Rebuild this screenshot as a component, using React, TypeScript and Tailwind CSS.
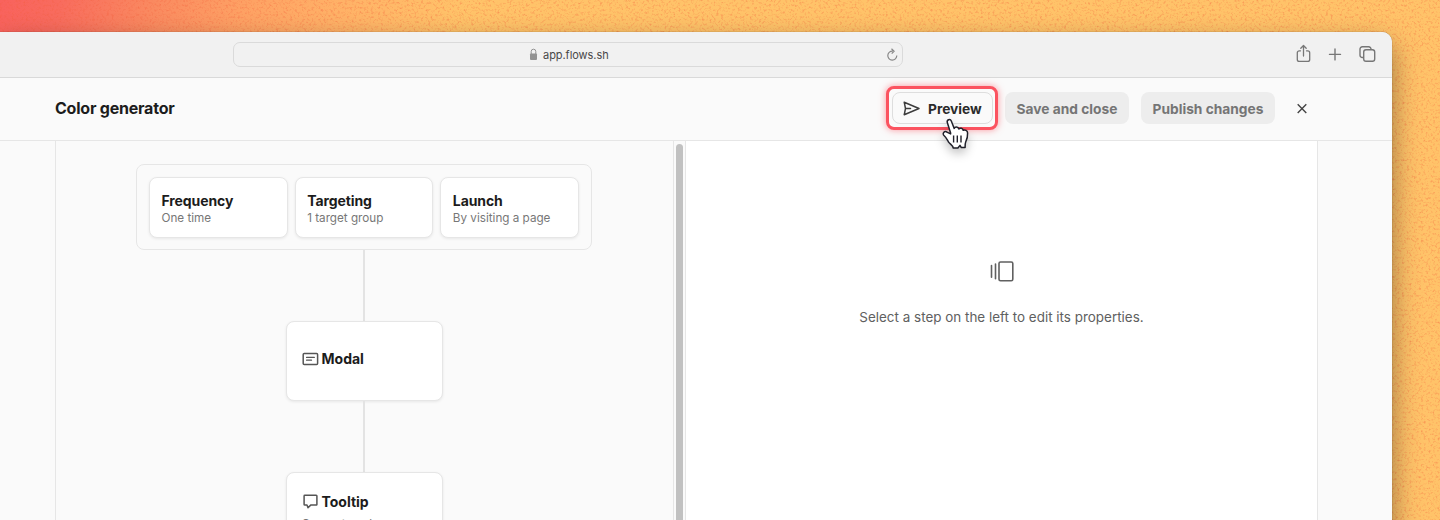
import React from "react";

const card = "rounded-lg border border-[#e6e6e6] bg-white shadow-[0_1px_3px_rgba(0,0,0,0.08)]";

function Trigger({ title, detail }: { title: string; detail: string }) {
  return (
    <div className={`${card} h-[61px] flex-1 pl-[11.5px] pt-[13px]`}>
      <div className="whitespace-nowrap text-[14px] font-bold leading-5 tracking-[-0.1px] text-[#1c1c1c]">{title}</div>
      <div className="whitespace-nowrap text-[11.7px] leading-[14px] text-[#777]">{detail}</div>
    </div>
  );
}

function Grain() {
  return (
    <svg className="absolute inset-0" width="1440" height="520" aria-hidden="true">
      <filter id="grain" x="0" y="0" width="100%" height="100%" colorInterpolationFilters="sRGB">
        <feTurbulence type="fractalNoise" baseFrequency="0.42" numOctaves="3" seed="7" />
        <feColorMatrix values="0 0 0 0 0.95  0 0 0 0 0.36  0 0 0 0 0.22  2.6 0 0 0 -1.3" />
      </filter>
      <rect width="1440" height="520" filter="url(#grain)" opacity="0.4" />
    </svg>
  );
}

function BrowserBar() {
  return (
    <div className="flex h-[46px] shrink-0 items-start border-b border-[#d9d9d9] bg-[#f1f1f1] pl-[233px] pr-4">
      <div className="mt-[10px] flex h-[25px] w-[670px] items-center rounded-[7px] border border-[#dadada] pr-[3px]">
        <div className="flex flex-1 items-center pl-[295px]">
          <svg width="9" height="13" viewBox="0 0 9 13" fill="none">
            <path d="M2.2 6V3.5a2.3 2.3 0 0 1 4.6 0V6" stroke="#929292" strokeWidth="1" />
            <rect x="1" y="5.6" width="7" height="6.4" rx="1" fill="#929292" />
          </svg>
          <span className="ml-[5px] pt-px text-[11px] leading-4 tracking-[-0.05px] text-[#484848]">app.flows.sh</span>
        </div>
        <svg width="13" height="14" viewBox="0 0 13 14" fill="none" stroke="#888" strokeWidth="1.2">
          <path d="M6.8 3.1A4.5 4.5 0 1 0 10.8 7.6M5.5 .8l2.6 2.4-2.4 2.5" />
        </svg>
      </div>
      <div className="ml-auto mt-[12px] flex items-center">
        <svg width="16" height="20" viewBox="0 0 16 20" fill="none" stroke="#777" strokeWidth="1.3" strokeLinecap="round" strokeLinejoin="round">
          <path d="M5.5 6.8H4.3A2 2 0 0 0 2.3 8.8v6.6a2 2 0 0 0 2 2h8.4a2 2 0 0 0 2-2V8.8a2 2 0 0 0-2-2H11.5M8.5 12V1.6M5.8 4.2 8.5 1.5l2.7 2.7" />
        </svg>
        <svg className="ml-[17px]" width="14" height="20" viewBox="0 0 14 20" fill="none" stroke="#777" strokeWidth="1.4" strokeLinecap="round">
          <path d="M7 4.9v11M1.5 10.4h11" />
        </svg>
        <svg className="ml-[17px]" width="17" height="20" viewBox="0 0 17 20" fill="none" stroke="#777" strokeWidth="1.4" strokeLinejoin="round">
          <rect x="4.7" y="5.8" width="11" height="11.5" rx="2.3" />
          <path d="M4.7 13.5H3.3A2.3 2.3 0 0 1 1 11.2V5.1a2.3 2.3 0 0 1 2.3-2.3h6.4A2.3 2.3 0 0 1 12 5.1v.7" />
        </svg>
      </div>
    </div>
  );
}

function Cursor() {
  return (
    <svg className="absolute left-[45px] top-[20px] drop-shadow-[0_5px_5px_rgba(0,0,0,0.22)]" width="42" height="45" viewBox="0 0 42 45" fill="none">
      <path d="M16.6 23.9 13.3 13.6c-.8-2.8 2.9-4.2 4-1.6l2.9 7.4c.7-2 4-2 4.6.5 1.2-1.3 4.1-.8 4.4 1.4 1.8-.9 4.3.4 4.4 2.7.2 3.9-.6 6.4-1.9 9-.6 1.2-.6 3.3-.6 5.6h-3.8l-1.3-2.2-2.1 2.6h-4.6c-.5-2.7-3.4-3.9-4.9-6.2-1.3-2-2.2-4.3-4.2-6.1-2.5-2.1.2-5.6 3.2-3.3l3.2 1.5Z" fill="#fff" stroke="#20202a" strokeWidth="1.5" strokeLinejoin="round" />
      <path d="M19.6 26.4v7.2M23.3 26.4v7.2M27 26.4v7.2" stroke="#20202a" strokeWidth="1.4" />
    </svg>
  );
}

function Header() {
  const grey = "flex h-8 items-center justify-center rounded-lg bg-[#ededed] pt-[2px] text-[13.75px] font-bold text-[#757575]";
  return (
    <header className="flex h-[63px] shrink-0 items-center border-b border-[#e6e6e6] bg-[#fafafa] pb-[2px] pl-[55px]">
      <h1 className="w-[831px] text-[16px] font-bold tracking-[-0.22px] text-[#1c1c1c]">Color generator</h1>
      <div className="relative z-10 h-[44px] w-[112px] rounded-[8px] border-[3px] border-[#fb5360] bg-[#fafafa] p-[3px] shadow-[0_0_7px_rgba(251,83,96,0.6)]">
        <button className="flex h-8 w-[101px] items-center rounded-lg border border-[#dedede] pl-[10px] text-[13.75px] font-bold text-[#2b2b2b]">
          <svg className="mr-2 shrink-0" width="17" height="16" viewBox="0 0 17 16" fill="none" stroke="#3d3d3d" strokeWidth="1.5" strokeLinejoin="round" strokeLinecap="round">
            <path d="M1.2 2.2 16 8.5 1.2 14.8 2.5 8.5ZM2.5 8.5H7.5" />
          </svg>
          <span className="pt-[2px]">Preview</span>
        </button>
        <Cursor />
      </div>
      <button className={`${grey} ml-[7px] w-[124px]`}>Save and close</button>
      <button className={`${grey} ml-3 w-[134px]`}>Publish changes</button>
      <svg className="ml-[21px]" width="12" height="12" viewBox="0 0 12 12" stroke="#444" strokeWidth="1.4">
        <path d="m1.7 2.3 8.6 8.6M10.3 2.3l-8.6 8.6" />
      </svg>
    </header>
  );
}

function Flow() {
  return (
    <section className="flex w-[619px] flex-col items-center border-x border-[#e6e6e6] pr-px pt-[23px]">
      <div className="flex h-[86px] w-[456px] shrink-0 gap-[7px] rounded-lg border border-[#e6e6e6] p-3">
        <Trigger title="Frequency" detail="One time" />
        <Trigger title="Targeting" detail="1 target group" />
        <Trigger title="Launch" detail="By visiting a page" />
      </div>
      <div className="h-[71px] w-[2px] shrink-0 bg-[#e3e3e3]" />
      <div className={`${card} flex h-[80px] w-[157px] shrink-0 items-center pb-1 pl-[15px]`}>
        <svg width="17" height="14" viewBox="0 0 17 14" fill="none" stroke="#555" strokeWidth="1.5" strokeLinecap="round">
          <rect x="1.2" y="1.4" width="14.4" height="11" rx="1" />
          <path d="M4.6 5.4h7.7M4.6 8.2h4.9" strokeWidth="1.3" />
        </svg>
        <span className="ml-[3px] text-[14px] font-bold leading-5 text-[#1c1c1c]">Modal</span>
      </div>
      <div className="h-[71px] w-[2px] shrink-0 bg-[#e3e3e3]" />
      <div className={`${card} h-[90px] w-[157px] shrink-0 pl-[15px] pt-[19px]`}>
        <div className="flex h-5 items-center">
          <svg className="mb-px" width="17" height="16" viewBox="0 0 17 16" fill="none" stroke="#555" strokeWidth="1.5" strokeLinejoin="round">
            <path d="M2.8 1.3h11.4a.7.7 0 0 1 .7.7v8.4a.7.7 0 0 1-.7.7H8.7L6 13.8l-1-2.7H2.8a.7.7 0 0 1-.7-.7V2a.7.7 0 0 1 .7-.7Z" />
          </svg>
          <span className="ml-[3px] text-[14px] font-bold leading-5 text-[#1c1c1c]">Tooltip</span>
        </div>
        <div className="mt-[5px] text-[11.7px] leading-[14px] text-[#777]">Generate color</div>
      </div>
    </section>
  );
}

export default function App() {
  return (
    <div className="relative h-[520px] w-[1440px] overflow-hidden bg-[#ffc067] font-[Inter,sans-serif]">
      <div className="absolute inset-0 bg-[linear-gradient(105deg,#f9625d_0px,#f86c5e_60px,#fa8a60_150px,#fea264_240px,#ffb367_340px,#ffc369_450px)]" />
      <Grain />
      <div className="relative mt-[32px] flex h-[560px] w-[1392px] flex-col overflow-hidden rounded-tr-[10px] bg-[#fafafa] shadow-[0_0_1px_rgba(0,0,0,0.6),0_12px_28px_rgba(0,0,0,0.4)]">
        <BrowserBar />
        <Header />
        <main className="flex flex-1 pl-[55px]">
          <Flow />
          <div className="flex w-[11px] pl-[2px] pt-[3px]">
            <div className="w-[7px] rounded-t-full bg-[#c1c1c1]" />
          </div>
          <section className="flex w-[633px] flex-col items-center border-x border-[#e6e6e6] bg-white pt-[119px]">
            <svg width="26" height="24" viewBox="0 0 26 24" fill="none" stroke="#606060" strokeWidth="1.6" strokeLinecap="round">
              <rect x="10" y="2" width="13.8" height="18.8" rx="1.5" />
              <path d="M6.5 4v14.8M2.5 5.5v11.8" />
            </svg>
            <p className="mt-[23px] text-[13.45px] leading-5 text-[#606060]">Select a step on the left to edit its properties.</p>
          </section>
        </main>
      </div>
    </div>
  );
}
